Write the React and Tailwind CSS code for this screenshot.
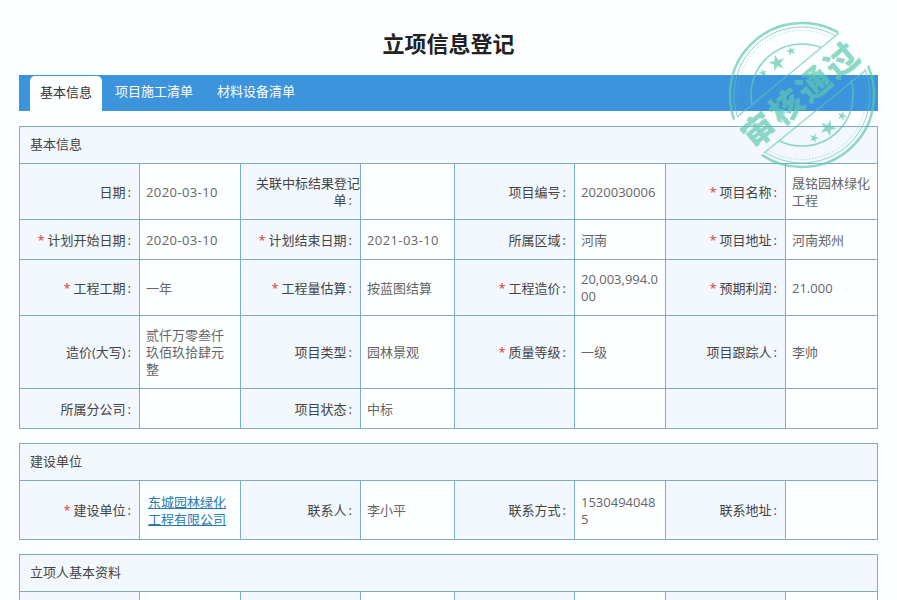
import React from "react";

const W = [120, 101, 120, 94, 120, 91, 120, 92];

function LabelCell({ text }) {
  const req = text.startsWith("*");
  const t = req ? text.slice(1) : text;
  const hasColon = t.endsWith(":");
  const body = hasColon ? t.slice(0, -1) : t;
  return (
    <td className="border border-[#7eacc9] bg-[#f3f8fe] pl-[15px] pr-0 pt-[1px] text-right align-middle text-[#444444] leading-[17px]">
      {req && <span className="text-[#e53935] mr-[3px]">*</span>}
      {body}
      {hasColon && <span className="ml-[2px]">:</span>}
      {t && <span className="inline-block w-[8px]" />}
    </td>
  );
}

function ValueCell({ value }) {
  const isDate = typeof value === "string" && /^\d{4}-\d{2}-\d{2}$/.test(value);
  return (
    <td className="border border-[#7eacc9] bg-[#fcfeff] pl-1.5 pr-1 pt-[1px] text-left align-middle leading-[17px] break-all">
      {typeof value === "object" ? (
        <a className="block px-[2px] text-[#2a7ab0] underline leading-[17px]">{value.anchor}</a>
      ) : (
        <span className={isDate ? "text-[#666666] tracking-[0.4px]" : "text-[#666666]"}>{value}</span>
      )}
    </td>
  );
}

function Section({ title, rows, mb }) {
  return (
    <table className={`table-fixed border-collapse w-[859px] ml-[19px] ${mb}`}>
      <colgroup>
        {W.map((w, i) => <col key={i} style={{ width: w }} />)}
      </colgroup>
      <tbody>
        <tr className="h-[37px]">
          <td colSpan={8} className="border border-[#7eacc9] bg-[#f3f8fe] px-[10px] text-[#444444]">{title}</td>
        </tr>
        {rows.map((r, i) => (
          <tr key={i} style={{ height: r.h }}>
            {r.c.map((c, j) =>
              j % 2 === 0 ? <LabelCell key={j} text={c} /> : <ValueCell key={j} value={c} />
            )}
          </tr>
        ))}
      </tbody>
    </table>
  );
}

const basic = [
  { h: 56, c: ["日期:", "2020-03-10", "关联中标结果登记单:", "", "项目编号:", "2020030006", "*项目名称:", "晟铭园林绿化工程"] },
  { h: 40, c: ["*计划开始日期:", "2020-03-10", "*计划结束日期:", "2021-03-10", "所属区域:", "河南", "*项目地址:", "河南郑州"] },
  { h: 56, c: ["*工程工期:", "一年", "*工程量估算:", "按蓝图结算", "*工程造价:", "20,003,994.000", "*预期利润:", "21.000"] },
  { h: 73, c: ["造价(大写):", "贰仟万零叁仟玖佰玖拾肆元整", "项目类型:", "园林景观", "*质量等级:", "一级", "项目跟踪人:", "李帅"] },
  { h: 40, c: ["所属分公司:", "", "项目状态:", "中标", "", "", "", ""] },
];
const build = [
  { h: 59, c: ["*建设单位:", { anchor: "东城园林绿化工程有限公司" }, "联系人:", "李小平", "联系方式:", "15304940485", "联系地址:", ""] },
];
const person = [{ h: 40, c: ["", "", "", "", "", "", "", ""] }];

function Star({ x, y, r, rot = 0 }) {
  const pts = [];
  for (let i = 0; i < 10; i++) {
    const a = ((-90 + rot + i * 36) * Math.PI) / 180;
    const rr = i % 2 === 0 ? r : r * 0.38;
    pts.push(`${(x + rr * Math.cos(a)).toFixed(2)},${(y + rr * Math.sin(a)).toFixed(2)}`);
  }
  return <polygon points={pts.join(" ")} fill="#5fc9b0" />;
}

function Stamp() {
  return (
    <svg viewBox="0 0 150 150" className="absolute left-[727px] top-[20px] w-[150px] h-[150px] opacity-70 pointer-events-none">
      <defs>
        <clipPath id="outside">
          <rect x="-100" y="-100" width="350" height="150.4" transform="rotate(-40 75 75)" />
          <rect x="-100" y="95" width="350" height="150" transform="rotate(-40 75 75)" />
        </clipPath>
      </defs>
      <g fill="none" stroke="#5fc9b0" clipPath="url(#outside)">
        <circle cx="75" cy="75" r="72" strokeWidth="2.5" />
        <circle cx="75" cy="75" r="68" strokeWidth="1" />
        <circle cx="75" cy="75" r="64.5" strokeWidth="1" strokeDasharray="1 2" />
        <circle cx="75" cy="75" r="51" strokeWidth="1.6" />
      </g>
      <g stroke="#5fc9b0" strokeWidth="1.2">
        <line x1="10" y1="97" x2="112" y2="13" />
        <line x1="37" y1="133" x2="139" y2="50" />
      </g>
      <Star x={50} y={43} r={8.5} rot={-15} />
      <Star x={64} y={31} r={5} rot={-15} />
      <Star x={36} y={53} r={4.5} rot={-15} />
      <Star x={101} y={108} r={8.5} rot={20} />
      <Star x={115} y={96} r={5} rot={20} />
      <Star x={87} y={118} r={5} rot={20} />
      <text
        x="73"
        y="73"
        transform="rotate(-40 73 73)"
        textAnchor="middle"
        dominantBaseline="central"
        fill="#5fc9b0"
        fontWeight="900"
        fontSize="33"
        letterSpacing="3"
        style={{ fontFamily: '"Noto Sans CJK SC", sans-serif' }}
      >
        审核通过
      </text>
    </svg>
  );
}

export default function App() {
  return (
    <div
      className="relative w-[897px] h-[600px] overflow-hidden bg-[#fcfeff] text-[13px]"
      style={{ fontFamily: '"Open Sans", "Noto Sans CJK SC", sans-serif' }}
    >
      <h1 className="h-[75px] pt-[27px] text-center text-[22px] font-bold leading-[32px] text-[#222222]">立项信息登记</h1>
      <div className="ml-[19px] w-[859px] h-[36px] bg-[#3b94dc] flex pl-[11px] items-end">
        <div className="w-[72px] h-[35px] bg-[#fcfeff] rounded-t-[5px] text-center leading-[32px] text-[#333333]">基本信息</div>
        <div className="ml-[13px] h-[36px] leading-[33px] text-white">项目施工清单</div>
        <div className="ml-[24px] h-[36px] leading-[33px] text-white">材料设备清单</div>
      </div>
      <div className="h-[15px]" />
      <Section title="基本信息" rows={basic} mb="mb-[14px]" />
      <Section title="建设单位" rows={build} mb="mb-[14px]" />
      <Section title="立项人基本资料" rows={person} mb="" />
      <Stamp />
    </div>
  );
}
